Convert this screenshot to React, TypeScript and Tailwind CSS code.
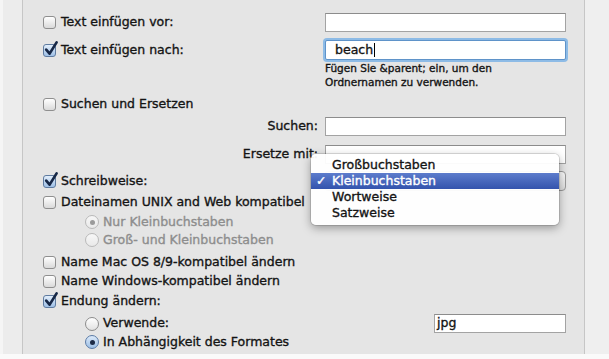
import React from 'react';

const Check: React.FC<{ checked?: boolean }> = ({ checked }) => (
  <span className="relative inline-block w-[13px] h-[13px] shrink-0">
    <span
      className={`absolute inset-0 rounded-[3px] border ${
        checked
          ? 'border-[#5f7ba0] bg-gradient-to-b from-[#e2eefb] to-[#9fc0e6]'
          : 'border-[#8f8f8f] bg-gradient-to-b from-[#ffffff] to-[#dadada]'
      }`}
    />
    {checked && (
      <svg className="absolute left-[1px] top-[-3px] overflow-visible" width="14" height="15" viewBox="0 0 14 15">
        <path d="M2.2 8.6 L5.6 12.6 L12.6 1.4" fill="none" stroke="#172847" strokeWidth="2.7" strokeLinecap="round" strokeLinejoin="round" />
      </svg>
    )}
  </span>
);

const Radio: React.FC<{ checked?: boolean; disabled?: boolean }> = ({ checked, disabled }) => {
  let ring = 'border-[#8c8c8c] bg-gradient-to-b from-[#ffffff] to-[#e2e2e2]';
  if (disabled) ring = 'border-[#b9b9b9] bg-gradient-to-b from-[#f7f7f7] to-[#e9e9e9]';
  else if (checked) ring = 'border-[#5b7ba6] bg-gradient-to-b from-[#dceaf9] to-[#9dbfe6]';
  return (
    <span className={`inline-flex items-center justify-center w-[14px] h-[14px] rounded-full border shrink-0 ${ring}`}>
      {checked && (
        <span className={`w-[5px] h-[5px] rounded-full ${disabled ? 'bg-[#9b9b9b]' : 'bg-[#1d2b46]'}`} />
      )}
    </span>
  );
};

const Field: React.FC<{ children?: React.ReactNode; className?: string }> = ({ children, className = '' }) => (
  <div className={`h-[19px] bg-white border border-[#a3a3a3] border-t-[#8c8c8c] flex items-center ${className}`}>
    {children}
  </div>
);

const CheckRow: React.FC<{ checked?: boolean; label: string }> = ({ checked, label }) => (
  <div className="flex items-center gap-[5px] whitespace-nowrap">
    <Check checked={checked} />
    <span>{label}</span>
  </div>
);

const RadioRow: React.FC<{ checked?: boolean; disabled?: boolean; label: string }> = ({ checked, disabled, label }) => (
  <div className={`flex items-center gap-[4px] pl-[42px] whitespace-nowrap ${disabled ? 'text-[#8d8d8d]' : ''}`}>
    <Radio checked={checked} disabled={disabled} />
    <span>{label}</span>
  </div>
);

export default function App() {
  return (
    <div className="w-[609px] h-[359px] bg-[#fafafa] overflow-hidden font-['DejaVu_Sans',Verdana,sans-serif] text-[12.5px] text-[#141414] [-webkit-text-stroke:0.35px]">
      <div className="h-[354px] flex">
        <div className="w-[3px] bg-[#f5f5f5]" />
        <div className="w-[19px] bg-[#ececec]" />

        <div className="relative w-[563px] bg-[#e5e5e5] border-x border-[#c6c6c6] flex flex-col pl-[20px] pr-[18px]">
          <div className="mt-[12px] h-[20px] flex items-center justify-between">
            <CheckRow label="Text einfügen vor:" />
            <Field className="w-[241px]" />
          </div>

          <div className="mt-[8px] h-[20px] flex items-center justify-between">
            <CheckRow checked label="Text einfügen nach:" />
            <div className="w-[241px] h-[20px] bg-white border border-[#5f93c9] rounded-[2px] shadow-[0_0_0_2px_#8dbbe6] flex items-center pl-[9px]">
              <span>beach</span>
              <span className="ml-[1px] w-[1px] h-[14px] bg-black" />
            </div>
          </div>

          <div className="h-[28px] flex justify-end">
            <div className="w-[241px] text-[10.5px] leading-[14px] pt-[1px]">
              <div>Fügen Sie &amp;parent; ein, um den</div>
              <div>Ordnernamen zu verwenden.</div>
            </div>
          </div>

          <div className="mt-[7px] h-[18px] flex items-center">
            <CheckRow label="Suchen und Ersetzen" />
          </div>

          <div className="mt-[4px] h-[19px] flex items-center justify-end gap-[7px]">
            <span>Suchen:</span>
            <Field className="w-[241px]" />
          </div>

          <div className="mt-[9px] h-[19px] flex items-center justify-end gap-[7px]">
            <span>Ersetze mit:</span>
            <Field className="w-[241px]" />
          </div>

          <div className="mt-[7px] h-[20px] flex items-center justify-between">
            <CheckRow checked label="Schreibweise:" />
            <div className="w-[242px] h-[20px] rounded-[4px] border border-[#9a9a9a] bg-gradient-to-b from-[#fbfbfb] to-[#dcdcdc]" />
          </div>

          <div className="mt-[2px] h-[19px] flex items-center">
            <CheckRow label="Dateinamen UNIX and Web kompatibel" />
          </div>

          <div className="mt-[1px] h-[18px] flex items-center">
            <RadioRow checked disabled label="Nur Kleinbuchstaben" />
          </div>

          <div className="h-[18px] flex items-center">
            <RadioRow disabled label="Groß- und Kleinbuchstaben" />
          </div>

          <div className="mt-[4px] h-[18px] flex items-center">
            <CheckRow label="Name Mac OS 8/9-kompatibel ändern" />
          </div>

          <div className="mt-[1px] h-[19px] flex items-center">
            <CheckRow label="Name Windows-kompatibel ändern" />
          </div>

          <div className="mt-[1px] h-[18px] flex items-center">
            <CheckRow checked label="Endung ändern:" />
          </div>

          <div className="mt-[4px] h-[19px] flex items-center justify-between">
            <RadioRow label="Verwende:" />
            <Field className="w-[132px] pl-[2px]">
              <span>jpg</span>
            </Field>
          </div>

          <div className="h-[18px] flex items-center">
            <RadioRow checked label="In Abhängigkeit des Formates" />
          </div>

          <div className="absolute left-[288px] top-[154px] w-[248px] h-[71px] bg-white/95 rounded-[5px] shadow-[0_3px_10px_rgba(0,0,0,0.35),0_0_0_1px_rgba(0,0,0,0.12)] pt-[3px]">
            <div className="h-[16px] flex items-center pl-[21px]">Großbuchstaben</div>
            <div className="h-[16px] flex items-center bg-gradient-to-b from-[#5d7ccc] to-[#3353ad] text-white">
              <span className="w-[21px] pl-[5px]">✓</span>
              <span>Kleinbuchstaben</span>
            </div>
            <div className="h-[16px] flex items-center pl-[21px]">Wortweise</div>
            <div className="h-[16px] flex items-center pl-[21px]">Satzweise</div>
          </div>
        </div>

        <div className="flex-1 bg-[#efefef]" />
      </div>
    </div>
  );
}
